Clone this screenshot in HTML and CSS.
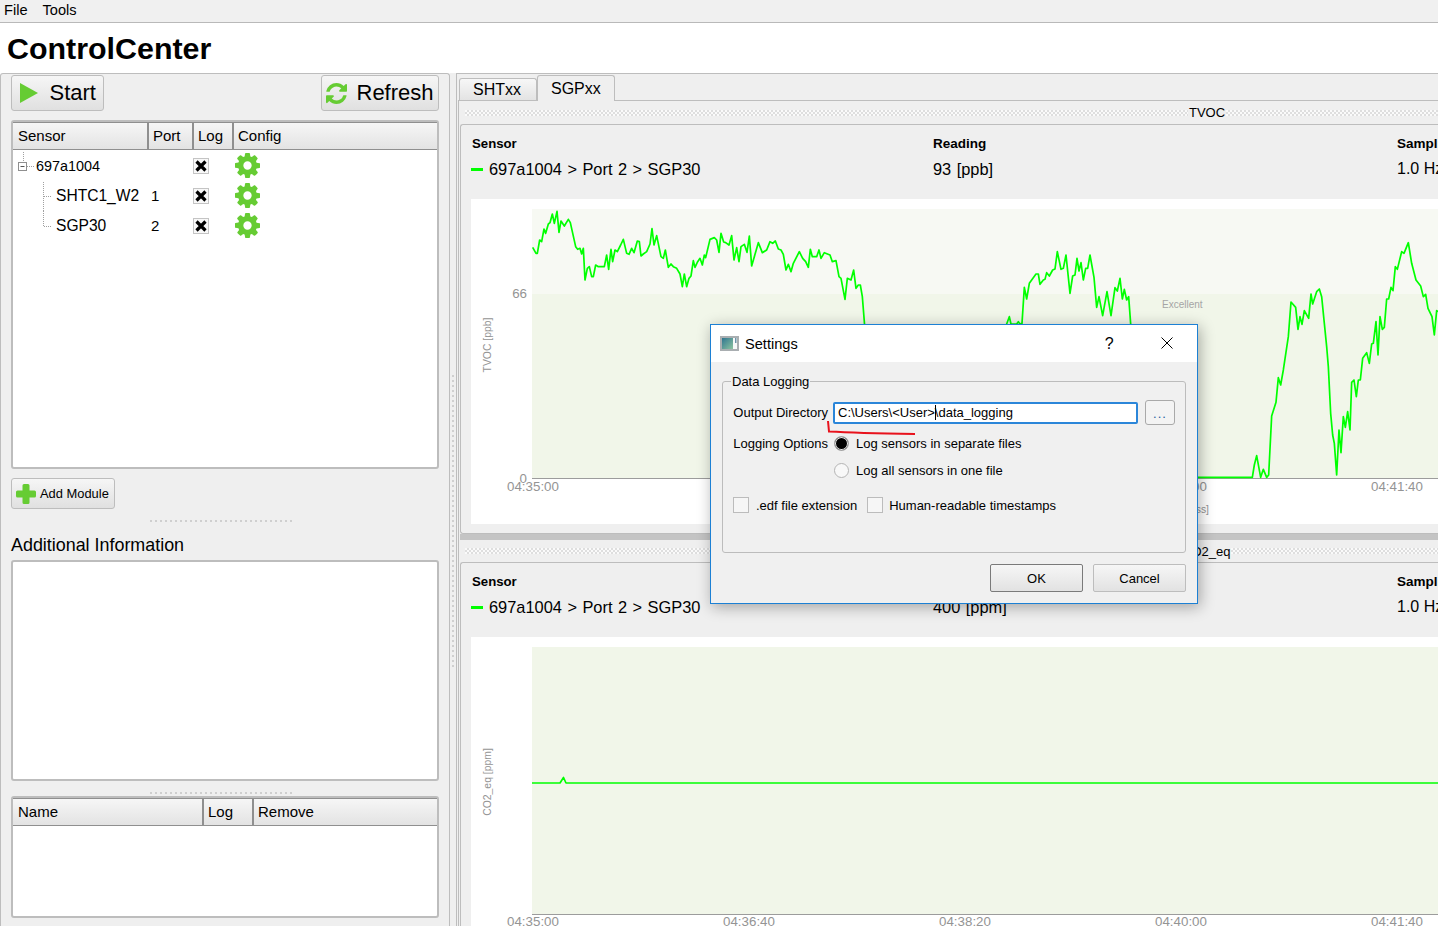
FILE: index.html
```html
<!DOCTYPE html>
<html lang="en">
<head>
    <meta charset="UTF-8">
    <title>ControlCenter</title>
    <link rel="stylesheet" href="styles.css">
</head>
<body>

<div class="menubar">
    <span>File</span>
    <span>Tools</span>
</div>
<h1 class="app-title">ControlCenter</h1>

<div class="main">
    <div class="left-panel">
        <div class="toolbar">
            <button class="big-btn start-btn">
                <svg class="start-icon" viewBox="0 0 18 20"><path d="M0 0L18 10L0 20Z"/></svg>
                Start
            </button>
            <button class="big-btn refresh-btn">
                <svg class="refresh-icon" viewBox="128 128 1536 1536"><path d="M1639 1056q0 5-1 7-64 268-268 434.5t-478 166.5q-146 0-282.5-55t-243.5-157l-129 129q-19 19-45 19t-45-19-19-45v-448q0-26 19-45t45-19h448q26 0 45 19t19 45-19 45l-137 137q71 66 161 102t187 36q134 0 250-65t186-179q11-17 53-117 8-23 30-23h192q13 0 22.5 9.5t9.5 22.5zm25-800v448q0 26-19 45t-45 19h-448q-26 0-45-19t-19-45 19-45l138-138q-148-137-349-137-134 0-250 65t-186 179q-11 17-53 117-8 23-30 23h-199q-13 0-22.5-9.5t-9.5-22.5v-7q65-268 270-434.5t480-166.5q146 0 284 55.5t245 156.5l130-129q19-19 45-19t45 19 19 45z"/></svg>
                Refresh
            </button>
        </div>

        <div class="table-box sensor-table">
            <div class="table-head sensor-cols">
                <div>Sensor</div>
                <div>Port</div>
                <div>Log</div>
                <div>Config</div>
            </div>
            <div class="tree-row sensor-cols">
                <div class="tree-name">
                    <svg class="tree-lines root-lines" viewBox="0 0 23 30">
                        <path class="dots" d="M10.5 1V10M14 15.5H21"/>
                        <rect class="expander" x="5.5" y="11.5" width="8" height="8"/>
                        <path class="minus" d="M7.5 15.5H11.5"/>
                    </svg>
                    <span class="tree-text root-text">697a1004</span>
                </div>
                <div></div>
                <div class="check-cell"><svg class="x-check" viewBox="0 0 14 14"><path d="M2.500 2.500L11.500 11.500M11.500 2.500L2.500 11.500"/></svg></div>
                <div class="gear-cell"><svg class="gear" viewBox="128 128 1536 1536"><use href="#cog"/></svg></div>
            </div>
            <div class="tree-row sensor-cols">
                <div class="tree-name">
                    <svg class="tree-lines child-lines" viewBox="0 0 43 30">
                        <path class="dots" d="M30.5 1V30M31 15.5H39"/>
                    </svg>
                    <span class="tree-text">SHTC1_W2</span>
                </div>
                <div class="port">1</div>
                <div class="check-cell"><svg class="x-check" viewBox="0 0 14 14"><path d="M2.500 2.500L11.500 11.500M11.500 2.500L2.500 11.500"/></svg></div>
                <div class="gear-cell"><svg class="gear" viewBox="128 128 1536 1536"><use href="#cog"/></svg></div>
            </div>
            <div class="tree-row sensor-cols">
                <div class="tree-name">
                    <svg class="tree-lines child-lines" viewBox="0 0 43 30">
                        <path class="dots" d="M30.5 0V15.5H39"/>
                    </svg>
                    <span class="tree-text">SGP30</span>
                </div>
                <div class="port">2</div>
                <div class="check-cell"><svg class="x-check" viewBox="0 0 14 14"><path d="M2.500 2.500L11.500 11.500M11.500 2.500L2.500 11.500"/></svg></div>
                <div class="gear-cell"><svg class="gear" viewBox="128 128 1536 1536"><use href="#cog"/></svg></div>
            </div>
        </div>

        <button class="add-btn">
            <svg class="plus-icon" viewBox="0 0 20 20"><path d="M8 0H12Q13.500 0 13.500 1.500V6.500H18.500Q20 6.500 20 8V12Q20 13.500 18.500 13.500H13.500V18.500Q13.500 20 12 20H8Q6.500 20 6.500 18.500V13.500H1.500Q0 13.500 0 12V8Q0 6.500 1.500 6.500H6.500V1.500Q6.500 0 8 0Z"/></svg>
            Add Module
        </button>

        <div class="h-handle handle-one"></div>
        <div class="info-title">Additional Information</div>
        <div class="info-box"></div>
        <div class="h-handle handle-two"></div>

        <div class="table-box module-table">
            <div class="table-head module-cols">
                <div>Name</div>
                <div>Log</div>
                <div>Remove</div>
            </div>
        </div>
    </div>

    <div class="v-split"><div class="v-dots"></div></div>

    <div class="right-panel">
        <div class="tabs">
            <div class="tab">SHTxx</div>
            <div class="tab tab-active">SGPxx</div>
        </div>
        <div class="pane">
            <div class="group-title">
                <div class="band band-tvoc"></div>
                <span>TVOC</span>
                <div class="band band-rest"></div>
            </div>
            <div class="frame frame-top">
                <div class="info-grid">
                    <b class="sensor-head">Sensor</b>
                    <b>Reading</b>
                    <b>Sampling Rate</b>
                    <div class="sensor-val"><i class="legend-dash"></i>697a1004 &gt; Port 2 &gt; SGP30</div>
                    <div>93 [ppb]</div>
                    <div class="rate-val">1.0 Hz</div>
                </div>
                <div class="chart">
                    <svg class="plot" width="967" height="325" viewBox="0 0 967 325">
                        <rect class="zone-good" x="61" y="10" width="906" height="85"/>
                        <rect class="zone-excellent" x="61" y="95" width="906" height="184"/>
                        <line class="axis" x1="61" y1="279.500" x2="967" y2="279.500"/>
                        <g transform="translate(-16 -129) scale(.33333)">
                            <polyline class="trace" points="233,532 243,550 247,550 254,510 260,515 267,477 272,490 280,462 285,458 292,432 298,460 306,424 312,487 318,453 328,468 340,448 346,458 362,530 368,538 375,535 380,552 385,535 390,630 397,595 403,590 410,620 415,620 422,585 430,590 448,590 455,555 461,598 468,538 473,575 480,540 487,545 497,525 505,508 515,550 522,553 530,535 537,548 547,513 553,515 558,558 565,552 575,545 585,522 591,476 597,525 605,497 618,560 625,565 631,540 640,592 648,582 655,590 665,595 675,612 682,650 688,612 695,650 702,625 708,618 715,572 720,592 728,575 735,565 742,585 748,555 752,563 765,508 778,503 785,510 792,547 798,490 806,516 812,518 822,525 830,497 837,570 845,533 852,575 858,530 868,523 876,547 883,498 890,588 898,560 910,518 922,548 935,540 945,515 953,520 961,513 970,537 978,540 985,553 993,600 1000,583 1008,605 1015,580 1033,545 1043,565 1052,575 1060,592 1066,538 1072,560 1085,560 1092,540 1098,565 1108,548 1125,555 1132,575 1143,572 1152,620 1158,625 1170,688 1177,625 1188,630 1196,600 1203,655 1210,645 1216,645 1222,680 1230,780"/>
                        </g>
                        <g transform="translate(529 1) scale(.33333)">
                            <polyline class="trace" points="10,400 20,372 28,350 33,372 50,372 55,365 60,372 66,370 73,262 80,297 88,250 95,240 108,222 115,222 120,253 130,240 135,238 140,218 148,228 158,210 165,207 172,155 183,208 190,205 198,165 210,280 218,228 225,225 231,175 237,213 243,188 250,240 257,205 263,205 270,165 282,232 290,322 297,290 308,347 321,275 333,347 345,263 352,273 360,235 367,297 373,268 380,300 386,290 393,385"/>
                            <polyline class="trace" points="580,832 757,832 763,795 770,767 782,832 790,808 800,832 806,825 815,648 828,607 835,533 842,555 850,510 865,410 873,306 887,322 894,388 900,350 906,373 913,332 926,355 933,282 938,312 950,275 958,267 965,290 973,370 980,440 985,500 992,640 998,705 1003,730 1010,825 1017,690 1023,758 1030,650 1036,682 1043,635 1050,690 1055,547 1062,540 1069,590 1075,540 1081,540 1088,475 1100,458 1108,490 1115,432 1120,430 1128,365 1134,465 1140,350 1147,388 1153,382 1160,297 1166,297 1173,262 1179,272 1186,200 1192,208 1205,155 1212,160 1225,128 1235,190 1248,240 1262,258 1270,290 1277,283 1284,325 1296,350 1303,405 1310,332 1316,335"/>
                        </g>
                        <text class="tick" x="56" y="99" text-anchor="end">66</text>
                        <text class="tick" x="56" y="284" text-anchor="end">0</text>
                        <text class="tick" x="62" y="292" text-anchor="middle">04:35:00</text>
                        <text class="tick" x="278" y="292" text-anchor="middle">04:36:40</text>
                        <text class="tick" x="494" y="292" text-anchor="middle">04:38:20</text>
                        <text class="tick" x="710" y="292" text-anchor="middle">04:40:00</text>
                        <text class="tick" x="926" y="292" text-anchor="middle">04:41:40</text>
                        <text class="axis-title" x="738" y="314" text-anchor="end">Time [hh:mm:ss]</text>
                        <text class="zone-label" x="691" y="109">Excellent</text>
                        <text class="axis-title" transform="translate(20 146) rotate(-90)" text-anchor="middle">TVOC [ppb]</text>
                    </svg>
                </div>
            </div>

            <div class="pane-split"></div>

            <div class="group-title group-title-low">
                <div class="band band-co2"></div>
                <span>CO2_eq</span>
                <div class="band band-rest"></div>
            </div>
            <div class="frame">
                <div class="info-grid">
                    <b class="sensor-head">Sensor</b>
                    <b>Reading</b>
                    <b>Sampling Rate</b>
                    <div class="sensor-val"><i class="legend-dash"></i>697a1004 &gt; Port 2 &gt; SGP30</div>
                    <div>400 [ppm]</div>
                    <div class="rate-val">1.0 Hz</div>
                </div>
                <div class="chart">
                    <svg class="plot" width="967" height="325" viewBox="0 0 967 325">
                        <rect class="zone-excellent" x="61" y="10" width="906" height="267"/>
                        <line class="axis" x1="61" y1="277.500" x2="967" y2="277.500"/>
                        <polyline class="trace" points="61,146 89,146 92.500,140.500 95,146 967,146"/>
                        <text class="tick" x="62" y="289" text-anchor="middle">04:35:00</text>
                        <text class="tick" x="278" y="289" text-anchor="middle">04:36:40</text>
                        <text class="tick" x="494" y="289" text-anchor="middle">04:38:20</text>
                        <text class="tick" x="710" y="289" text-anchor="middle">04:40:00</text>
                        <text class="tick" x="926" y="289" text-anchor="middle">04:41:40</text>
                        <text class="axis-title" transform="translate(20 145) rotate(-90)" text-anchor="middle">CO2_eq [ppm]</text>
                    </svg>
                </div>
            </div>
        </div>
    </div>
</div>

<div class="dialog">
    <div class="dialog-bar">
        <svg class="dialog-icon" viewBox="0 0 19 15">
            <defs>
                <linearGradient id="iconFill" x1="0" y1="0" x2="1" y2="1">
                    <stop offset="0" stop-color="#2f7590"/>
                    <stop offset="1" stop-color="#8cc4a0"/>
                </linearGradient>
            </defs>
            <rect x="1" y="1" width="17" height="13" fill="#f6f8f8" stroke="#a9aeb1" stroke-width="2"/>
            <rect x="2" y="2" width="11" height="11" fill="url(#iconFill)"/>
            <rect x="15" y="2" width="1.500" height="5" fill="#6f93a8"/>
        </svg>
        <span class="dialog-title">Settings</span>
        <span class="dialog-help">?</span>
        <svg class="dialog-close" viewBox="0 0 12 12"><path d="M0.500 0.500L11.500 11.500M11.500 0.500L0.500 11.500"/></svg>
    </div>
    <div class="dialog-body">
        <div class="groupbox">
            <span class="groupbox-title">Data Logging</span>
            <div class="form-row dir-row">
                <label class="form-label">Output Directory</label>
                <div class="dir-input">C:\Users\&lt;User&gt;<i class="caret"></i>\data_logging</div>
                <button class="dots-btn">...</button>
            </div>
            <div class="form-row radio-row">
                <label class="form-label">Logging Options</label>
                <span class="radio radio-on"></span>
                <span>Log sensors in separate files</span>
            </div>
            <div class="form-row radio-row radio-row-two">
                <label class="form-label"></label>
                <span class="radio"></span>
                <span>Log all sensors in one file</span>
            </div>
            <div class="form-row check-row">
                <span class="box"></span>
                <span>.edf file extension</span>
                <span class="box box-two"></span>
                <span>Human-readable timestamps</span>
            </div>
        </div>
        <div class="dialog-buttons">
            <button class="dlg-btn dlg-default">OK</button>
            <button class="dlg-btn">Cancel</button>
        </div>
    </div>
    <svg class="red-mark" width="92" height="16" viewBox="0 0 92 16"><path d="M2 1L3 11.500Q30 13 89 14"/></svg>
</div>

<svg width="0" height="0" class="defs">
    <defs>
        <path id="cog" d="M1152 896q0-106-75-181t-181-75-181 75-75 181 75 181 181 75 181-75 75-181zm512-109v222q0 12-8 23t-20 13l-185 28q-19 54-39 91 35 50 107 138 10 12 10 25t-9 23q-27 37-99 108t-94 71q-12 0-26-9l-138-108q-44 23-91 38-16 136-29 186-7 28-36 28h-222q-14 0-24.5-8.5t-11.5-21.5l-28-184q-49-16-90-37l-141 107q-10 9-25 9-14 0-25-11-126-114-165-168-7-10-7-23 0-12 8-23 15-21 51-66.5t54-70.5q-27-50-41-99l-183-27q-13-2-21-12.5t-8-23.5v-222q0-12 8-23t19-13l186-28q14-46 39-92-40-57-107-138-10-12-10-24 0-10 9-23 26-36 98.5-107.5t94.5-71.5q13 0 26 10l138 107q44-23 91-38 16-136 29-186 7-28 36-28h222q14 0 24.5 8.5t11.5 21.5l28 184q49 16 90 37l142-107q9-9 24-9 13 0 25 10 129 119 165 170 7 8 7 22 0 12-8 23-15 21-51 66.5t-54 70.5q26 50 41 98l183 28q13 2 21 12.5t8 23.5z"/>
    </defs>
</svg>

</body>
</html>
```

FILE: styles.css
```css
html, body {
    margin: 0;
    height: 926px;
    overflow: hidden;
}
body {
    position: relative;
    font-family: "Liberation Sans", Arial, sans-serif;
    background-color: #fff;
    color: #000;
}
button {
    font-family: inherit;
    color: #000;
    padding: 0;
}
.defs {
    position: absolute;
}

/* top of window */
.menubar {
    display: flex;
    gap: 15px;
    height: 22px;
    padding-left: 4px;
    background-color: #f0f0f0;
    border-bottom: 1px solid #b9b9b9;
    font-size: 14.6px;
    line-height: 20px;
}
.app-title {
    height: 50px;
    margin: 0;
    padding-left: 7px;
    font-size: 30.4px;
    line-height: 51px;
    font-weight: bold;
}
.main {
    display: flex;
    height: 853px;
    overflow: hidden;
}

/* left side */
.left-panel {
    box-sizing: border-box;
    flex: none;
    width: 450px;
    height: 853px;
    padding: 1px 10px 0;
    background-color: #efefef;
    border: 1px solid #bdbdbd;
    border-bottom: none;
    border-radius: 3px 3px 0 0;
}
.toolbar {
    display: flex;
    justify-content: space-between;
}
.big-btn {
    display: flex;
    align-items: center;
    height: 36px;
    font-size: 22px;
    background: linear-gradient(#f6f6f6, #e0e0e0);
    border: 1px solid #bdbdbd;
    border-radius: 3px;
}
.start-btn {
    width: 93px;
    padding-left: 8px;
    gap: 11.5px;
}
.refresh-btn {
    width: 118px;
    padding-left: 4px;
    gap: 9.5px;
}
.start-icon {
    width: 18px;
    height: 20px;
    fill: #66cc33;
}
.refresh-icon {
    width: 21px;
    height: 21px;
    fill: #66cc33;
}
.table-box {
    box-sizing: border-box;
    background-color: #fff;
    border: 2px solid #bdbdbd;
    border-radius: 3px;
}
.sensor-table {
    height: 349px;
    margin-top: 9px;
}
.module-table {
    height: 122px;
    margin-top: 2px;
}
.table-head {
    display: grid;
    height: 28px;
    font-size: 15px;
    line-height: 26px;
    background: linear-gradient(#f6f6f6, #e3e3e3);
    border-top: 1px solid #8f8f8f;
    border-bottom: 1px solid #8f8f8f;
    box-sizing: border-box;
}
.table-head > div {
    padding-left: 4px;
    border-right: 2px solid #8f8f8f;
}
.table-head > div:first-child {
    padding-left: 5px;
}
.table-head > div:last-child {
    border-right: none;
}
.sensor-cols {
    display: grid;
    grid-template-columns: 136px 45px 40px 1fr;
}
.module-cols {
    display: grid;
    grid-template-columns: 191px 50px 1fr;
}
.tree-row {
    height: 30px;
    font-size: 15px;
    line-height: 30px;
    align-items: center;
}
.tree-name {
    display: flex;
    align-items: center;
    white-space: nowrap;
}
.tree-lines {
    flex: none;
    height: 30px;
}
.root-lines {
    width: 23px;
}
.child-lines {
    width: 43px;
}
.tree-text {
    padding-top: 1px;
    font-size: 15.6px;
}
.root-text {
    font-size: 14.4px;
}
.dots {
    fill: none;
    stroke: #a0a0a0;
    stroke-dasharray: 1 1;
}
.expander {
    fill: #fff;
    stroke: #8f8f8f;
}
.minus {
    stroke: #555;
}
.port {
    padding: 1px 0 0 2px;
}
.check-cell, .gear-cell {
    display: flex;
    align-items: center;
    height: 30px;
}
.x-check {
    box-sizing: border-box;
    width: 16px;
    height: 16px;
    margin-left: -1px;
    background-color: #f8f8f8;
    border: 1px solid #c4c4c4;
    fill: none;
    stroke: #000;
    stroke-width: 3.2;
}
.gear-cell {
    padding-left: 1px;
}
.gear {
    width: 25px;
    height: 25px;
    margin-top: -1px;
    fill: #66cc33;
}
.add-btn {
    display: flex;
    align-items: center;
    gap: 4px;
    box-sizing: border-box;
    width: 104px;
    height: 31px;
    margin-top: 9px;
    padding-left: 4px;
    font-size: 12.9px;
    background: linear-gradient(#f6f6f6, #e0e0e0);
    border: 1px solid #bdbdbd;
    border-radius: 3px;
}
.plus-icon {
    width: 20px;
    height: 20px;
    fill: #66cc33;
}
.h-handle {
    width: 143px;
    height: 2px;
    margin-left: 139px;
    background: repeating-linear-gradient(90deg, #cfcfcf 0 2px, transparent 2px 5px);
}
.handle-one {
    margin-top: 11px;
}
.handle-two {
    margin-top: 11px;
}
.info-title {
    margin-top: 12px;
    font-size: 17.9px;
    line-height: 22px;
}
.info-box {
    box-sizing: border-box;
    height: 221px;
    margin-top: 4px;
    background-color: #fff;
    border: 2px solid #bdbdbd;
    border-radius: 3px;
}

/* splitter between the sides */
.v-split {
    flex: none;
    width: 6px;
    background-color: #efefef;
}
.v-dots {
    width: 2px;
    height: 295px;
    margin: 302px 0 0 2px;
    background: repeating-linear-gradient(#cfcfcf 0 2px, transparent 2px 5px);
}

/* right side */
.right-panel {
    flex: 1;
    min-width: 0;
    padding-left: 1px;
    background-color: #efefef;
    border-top: 1px solid #bdbdbd;
    border-left: 1px solid #bdbdbd;
}
.tabs {
    display: flex;
    align-items: flex-end;
    height: 26px;
    padding-left: 1px;
}
.tab {
    box-sizing: border-box;
    width: 78px;
    height: 22px;
    padding-left: 13px;
    font-size: 16px;
    line-height: 22px;
    background: linear-gradient(#f7f7f7, #e3e3e3);
    border: 1px solid #bdbdbd;
    border-bottom: none;
    border-radius: 3px 3px 0 0;
}
.tab-active {
    position: relative;
    height: 26px;
    margin-bottom: -1px;
    line-height: 25px;
    background: #efefef;
}
.pane {
    padding-left: 1px;
    border-top: 1px solid #bdbdbd;
    border-left: 1px solid #bdbdbd;
}
.group-title {
    display: flex;
    align-items: center;
    height: 23px;
    padding-left: 5px;
    font-size: 13px;
    white-space: nowrap;
}
.group-title-low {
    height: 22px;
}
.band {
    flex: none;
    height: 6px;
    background: repeating-conic-gradient(#dedede 0 25%, #fafafa 0 50%) 0 0 / 4px 4px;
}
.band-tvoc {
    width: 723px;
}
.band-co2 {
    width: 716px;
}
.band-rest {
    flex: 1;
}
.group-title span {
    padding: 0 1px;
}
.frame {
    box-sizing: border-box;
    border-top: 1px solid #bdbdbd;
    border-left: 1px solid #bdbdbd;
    border-radius: 3px 0 0 3px;
}
.frame-top {
    height: 410px;
    border-bottom: 1px solid #bdbdbd;
}
.info-grid {
    display: grid;
    grid-template-columns: 461px 464px 1fr;
    grid-template-rows: 17px 20px;
    row-gap: 7px;
    padding: 10px 0 20px 11px;
    font-size: 16.4px;
    line-height: 20px;
    word-spacing: 0.9px;
    white-space: nowrap;
}
.info-grid b {
    font-size: 13.5px;
    line-height: 17px;
    word-spacing: 0;
}
.info-grid .sensor-head {
    font-size: 13.2px;
}
.info-grid .rate-val {
    font-size: 16px;
    word-spacing: 0;
}
.sensor-val {
    display: flex;
    align-items: center;
}
.legend-dash {
    flex: none;
    width: 12px;
    height: 3px;
    margin: 1px 6px 0 -1px;
    background-color: #00ff00;
}
.chart {
    height: 325px;
    margin-left: 10px;
    background-color: #fff;
}
.plot {
    display: block;
    font-family: "Liberation Sans", Arial, sans-serif;
}
.zone-good {
    fill: #f7f9f3;
}
.zone-excellent {
    fill: #f1f6e9;
}
.axis {
    stroke: #9c9c9c;
}
.trace {
    fill: none;
    stroke: #00ff00;
    stroke-width: 1.7;
    vector-effect: non-scaling-stroke;
    stroke-linejoin: round;
}
.tick {
    font-size: 13.33px;
    fill: #949494;
}
.axis-title {
    font-size: 10.4px;
    fill: #949494;
}
.zone-label {
    font-size: 10px;
    fill: #a5a5a5;
}
.pane-split {
    height: 6px;
    background-color: #c4c4c4;
}

/* settings dialog */
.dialog {
    position: absolute;
    left: 710px;
    top: 324px;
    box-sizing: border-box;
    width: 488px;
    height: 280px;
    background-color: #f0f0f0;
    border: 1px solid #1c80d4;
    box-shadow: 2px 3px 14px rgba(0, 0, 0, 0.32);
    font-size: 13px;
}
.dialog-bar {
    display: flex;
    align-items: center;
    height: 37px;
    padding-left: 9px;
    background-color: #fff;
}
.dialog-icon {
    width: 19px;
    height: 15px;
}
.dialog-title {
    margin-left: 6px;
    font-size: 14.6px;
}
.dialog-help {
    margin-left: 307px;
    font-size: 16px;
}
.dialog-close {
    width: 12px;
    height: 12px;
    margin: 0 0 1px 47px;
    fill: none;
    stroke: #000;
}
.dialog-body {
    padding: 19px 11px 0;
}
.groupbox {
    position: relative;
    box-sizing: border-box;
    height: 172px;
    padding: 18px 0 0 10px;
    border: 1px solid #bcbcbc;
    border-radius: 3px;
}
.groupbox-title {
    position: absolute;
    left: 8px;
    top: -8px;
    padding: 0 1px;
    line-height: 16px;
    background-color: #f0f0f0;
}
.form-row {
    display: flex;
    align-items: center;
    white-space: nowrap;
}
.form-label {
    flex: none;
    width: 95px;
    text-align: right;
}
.dir-row {
    height: 25px;
}
.dir-input {
    box-sizing: border-box;
    width: 305px;
    height: 22px;
    margin-left: 5px;
    padding-left: 3px;
    line-height: 18px;
    background-color: #fff;
    border: 2px solid #2b86d9;
    border-radius: 2px;
}
.caret {
    display: inline-block;
    width: 1px;
    height: 15px;
    margin-right: -1px;
    vertical-align: -3px;
    background-color: #000;
}
.dots-btn {
    box-sizing: border-box;
    width: 30px;
    height: 25px;
    margin-left: 7px;
    font-size: 13px;
    line-height: 26px;
    letter-spacing: 1px;
    color: #2b5f9e;
    background-color: #f3f3f3;
    border: 1px solid #a9a9a9;
    border-radius: 3px;
}
.radio-row {
    height: 20px;
    margin-top: 8px;
}
.radio-row-two {
    margin-top: 7px;
}
.radio {
    box-sizing: border-box;
    flex: none;
    width: 15px;
    height: 15px;
    margin: 0 7px 0 6px;
    background-color: #f8f8f8;
    border: 1px solid #b4b4b4;
    border-radius: 50%;
}
.radio-on {
    background-color: #000;
    box-shadow: inset 0 0 0 1px #f0f0f0;
}
.check-row {
    height: 20px;
    margin-top: 15px;
}
.box {
    box-sizing: border-box;
    flex: none;
    width: 16px;
    height: 16px;
    margin-right: 7px;
    background-color: #f6f6f6;
    border: 1px solid #bcbcbc;
}
.box-two {
    margin-left: 10px;
    margin-right: 6px;
}
.dialog-buttons {
    display: flex;
    justify-content: flex-end;
    gap: 10px;
    margin-top: 11px;
}
.dlg-btn {
    box-sizing: border-box;
    width: 93px;
    height: 28px;
    font-size: 13px;
    background: linear-gradient(#f6f6f6, #e2e2e2);
    border: 1px solid #bdbdbd;
    border-radius: 2px;
}
.dlg-default {
    border-color: #7a7a7a;
}
.red-mark {
    position: absolute;
    left: 115px;
    top: 95px;
    fill: none;
    stroke: #e8121c;
    stroke-width: 2;
}
```
